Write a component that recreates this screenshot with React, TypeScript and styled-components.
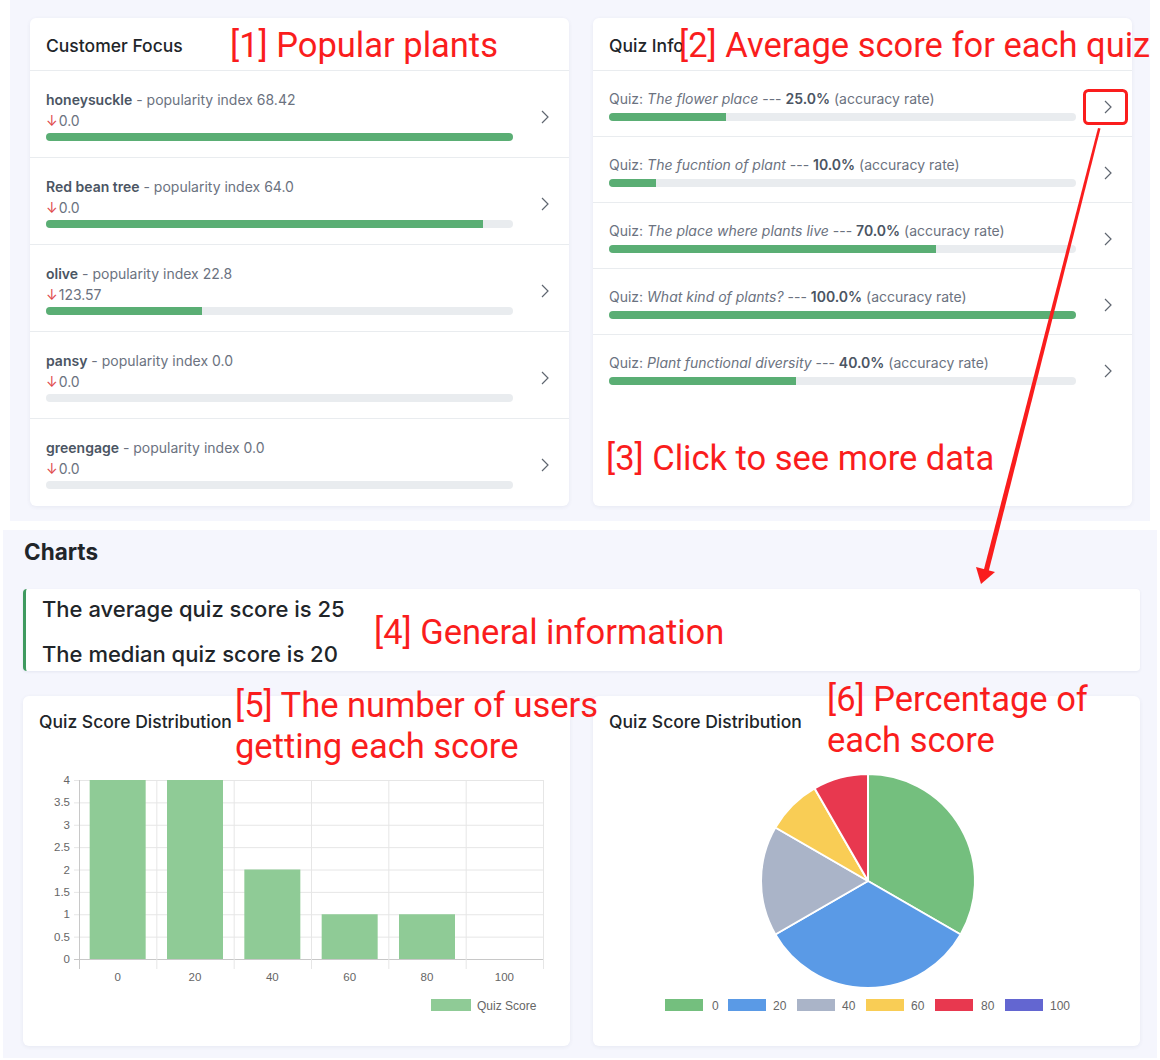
import React from "react";
import styled, { createGlobalStyle } from "styled-components";

const Global = createGlobalStyle`
  html, body { margin: 0; padding: 0; background: #ffffff; overflow: hidden; }
  body { font-family: Inter, "Liberation Sans", sans-serif; -webkit-font-smoothing: antialiased; }
  * { box-sizing: border-box; }
`;

const Root = styled.div`
  position: relative;
  width: 1160px;
  height: 1060px;
  overflow: hidden;
`;

const TopPanel = styled.section`
  margin-left: 10px;
  width: 1140px;
  height: 521px;
  background: #f5f6fd;
  padding: 18px 18px 0 20px;
  display: grid;
  grid-template-columns: 539px 539px;
  column-gap: 24px;
  align-items: start;
`;

const Card = styled.div`
  background: #ffffff;
  border-radius: 6px;
  box-shadow: 0 1px 4px rgba(40, 50, 100, 0.07);
  height: 488px;
  overflow: hidden;
`;

const CardHeader = styled.div`
  height: 53px;
  border-bottom: 1px solid #e9ecef;
  padding: 2px 16px 0;
  display: flex;
  align-items: center;
  font-size: 17.5px;
  font-weight: 500;
  color: #212529;
`;

const Row = styled.div<{ $compact?: boolean; $last?: boolean }>`
  display: grid;
  grid-template-columns: 467px 1fr;
  align-items: center;
  padding: 18px 20px ${(p) => (p.$compact ? "15px" : "16px")} 16px;
  border-bottom: ${(p) => (p.$last ? "none" : "1px solid #e9ecef")};
`;

const RowBody = styled.div`
  display: flex;
  flex-direction: column;
`;

const Line = styled.div`
  font-size: 14px;
  line-height: 21px;
  color: #6b7280;
  white-space: nowrap;
`;

const QuizLine = styled(Line)`
  line-height: 20px;
`;

const Strong = styled.b`
  font-weight: 600;
  color: #4b5563;
`;

const Em = styled.i`
  font-style: italic;
`;

const Down = styled.span`
  color: #e0474c;
  margin-right: 1px;
`;

const Track = styled.div<{ $mt: number }>`
  height: 8px;
  border-radius: 4px;
  background: #e9ecef;
  margin-top: ${(p) => p.$mt}px;
  overflow: hidden;
`;

const Fill = styled.div`
  height: 100%;
  background: #5aae74;
`;

const ChevronBox = styled.div`
  justify-self: end;
  display: flex;
  padding-top: 4px;
`;

const Chevron = () => (
  <ChevronBox>
    <svg width="8" height="14" viewBox="0 0 8 14">
      <polyline points="1,1 7,7 1,13" fill="none" stroke="#5f6670" strokeWidth="1.2" />
    </svg>
  </ChevronBox>
);

const BottomPanel = styled.section`
  margin: 9px 0 0 3px;
  width: 1154px;
  height: 528px;
  background: #f5f6fd;
  padding: 8px 17px 0 20px;
  display: flex;
  flex-direction: column;
`;

const SectionTitle = styled.h2`
  margin: 0 0 0 1px;
  font-size: 22.5px;
  line-height: 28px;
  font-weight: 700;
  color: #212529;
`;

const InfoBox = styled.div`
  margin-top: 23px;
  height: 82px;
  background: #ffffff;
  border-left: 3px solid #3f9a5f;
  border-radius: 4px;
  box-shadow: 0 1px 3px rgba(40, 50, 100, 0.08);
  padding: 7px 16px 0;
  display: flex;
  flex-direction: column;
  gap: 19px;
`;

const InfoText = styled.div`
  font-size: 22px;
  line-height: 26px;
  font-weight: 500;
  color: #212529;
`;

const ChartGrid = styled.div`
  margin-top: 25px;
  display: grid;
  grid-template-columns: 547px 547px;
  column-gap: 23px;
`;

const ChartCard = styled.div`
  background: #ffffff;
  border-radius: 6px;
  box-shadow: 0 1px 4px rgba(40, 50, 100, 0.07);
  height: 350px;
  padding: 16px;
`;

const ChartTitle = styled.div`
  font-size: 17.5px;
  line-height: 20px;
  font-weight: 500;
  color: #212529;
`;

const ChartSvg = styled.svg`
  display: block;
  margin-top: 34px;
  font-family: "Liberation Sans", Arial, sans-serif;
`;

const Overlay = styled.svg`
  position: absolute;
  left: 0;
  top: 0;
  pointer-events: none;
`;

const Note = styled.div<{ $x: number; $y: number }>`
  position: absolute;
  left: ${(p) => p.$x}px;
  top: ${(p) => p.$y}px;
  color: #fa1d1d;
  font-family: Roboto, "Noto Sans CJK SC", sans-serif;
  font-size: 34.5px;
  line-height: 41px;
  white-space: nowrap;
  pointer-events: none;
`;

const plants = [
  { name: "honeysuckle", idx: "68.42", delta: "0.0", pct: 100 },
  { name: "Red bean tree", idx: "64.0", delta: "0.0", pct: 93.5 },
  { name: "olive", idx: "22.8", delta: "123.57", pct: 33.3 },
  { name: "pansy", idx: "0.0", delta: "0.0", pct: 0 },
  { name: "greengage", idx: "0.0", delta: "0.0", pct: 0 },
];

const quizzes = [
  { title: "The flower place", rate: "25.0%", pct: 25 },
  { title: "The fucntion of plant", rate: "10.0%", pct: 10 },
  { title: "The place where plants live", rate: "70.0%", pct: 70 },
  { title: "What kind of plants?", rate: "100.0%", pct: 100 },
  { title: "Plant functional diversity", rate: "40.0%", pct: 40 },
];

const BarChart = () => {
  const left = 40;
  const right = 504;
  const top = 14;
  const bottom = 193;
  const h = bottom - top;
  const cw = (right - left) / 6;
  const yv = [0, 0.5, 1, 1.5, 2, 2.5, 3, 3.5, 4];
  const cats = ["0", "20", "40", "60", "80", "100"];
  const vals = [4, 4, 2, 1, 1, 0];
  const y = (v: number) => bottom - (v / 4) * h;
  return (
    <ChartSvg width="515" height="264" viewBox="0 0 515 264">
      {yv.map((v) => (
        <g key={v}>
          <line x1={left - 5} x2={right} y1={y(v) + 0.5} y2={y(v) + 0.5} stroke={v === 0 ? "#c8c8c8" : "#e6e6e6"} />
          <text x={31} y={y(v) + 4} fontSize="11.5" fill="#666" textAnchor="end">
            {v}
          </text>
        </g>
      ))}
      {Array.from({ length: 7 }).map((_, i) => (
        <line
          key={i}
          x1={left + i * cw + 0.5}
          x2={left + i * cw + 0.5}
          y1={top}
          y2={bottom + 10}
          stroke={i === 0 ? "#c8c8c8" : "#e6e6e6"}
        />
      ))}
      {vals.map((v, i) =>
        v > 0 ? (
          <rect key={i} x={left + i * cw + cw / 2 - 28} y={y(v)} width="56" height={bottom - y(v)} fill="#8fcb96" />
        ) : null
      )}
      {cats.map((c, i) => (
        <text key={c} x={left + i * cw + cw / 2} y={215} fontSize="11.5" fill="#666" textAnchor="middle">
          {c}
        </text>
      ))}
      <rect x="392" y="233" width="40" height="12" fill="#8fcb96" />
      <text x="438" y="243.5" fontSize="12" fill="#666">
        Quiz Score
      </text>
    </ChartSvg>
  );
};

const PieChart = () => {
  const cx = 259;
  const cy = 115;
  const r = 107;
  const data = [4, 4, 2, 1, 1, 0];
  const colors = ["#74bf7e", "#5a9ae6", "#aab4c8", "#f9cd55", "#e8384f", "#6366d1"];
  const labels = ["0", "20", "40", "60", "80", "100"];
  const total = data.reduce((a, b) => a + b, 0);
  let a0 = -Math.PI / 2;
  const slices = data.map((d, i) => {
    const a1 = a0 + (d / total) * Math.PI * 2;
    const x0 = cx + r * Math.cos(a0);
    const y0 = cy + r * Math.sin(a0);
    const x1 = cx + r * Math.cos(a1);
    const y1 = cy + r * Math.sin(a1);
    const large = a1 - a0 > Math.PI ? 1 : 0;
    const path = `M${cx},${cy} L${x0},${y0} A${r},${r} 0 ${large} 1 ${x1},${y1} Z`;
    a0 = a1;
    return d > 0 ? <path key={i} d={path} fill={colors[i]} stroke="#fff" strokeWidth="2" strokeLinejoin="round" /> : null;
  });
  const boxX = [56, 119, 188, 257, 326, 396];
  const txtX = [103, 164, 233, 302, 372, 441];
  return (
    <ChartSvg width="515" height="264" viewBox="0 0 515 264">
      {slices}
      {labels.map((l, i) => (
        <g key={l}>
          <rect x={boxX[i]} y="233" width="38" height="12" fill={colors[i]} />
          <text x={txtX[i]} y="243.5" fontSize="12" fill="#666">
            {l}
          </text>
        </g>
      ))}
    </ChartSvg>
  );
};

export default function App() {
  return (
    <Root>
      <Global />
      <TopPanel>
        <Card>
          <CardHeader>Customer Focus</CardHeader>
          {plants.map((p, i) => (
            <Row key={p.name} $last={i === plants.length - 1}>
              <RowBody>
                <Line>
                  <Strong>{p.name}</Strong> - popularity index {p.idx}
                </Line>
                <Line>
                  <Down>↓</Down>
                  {p.delta}
                </Line>
                <Track $mt={2}>
                  <Fill style={{ width: `${p.pct}%` }} />
                </Track>
              </RowBody>
              <Chevron />
            </Row>
          ))}
        </Card>
        <Card>
          <CardHeader>Quiz Info</CardHeader>
          {quizzes.map((q, i) => (
            <Row key={q.title} $compact $last={i === quizzes.length - 1}>
              <RowBody>
                <QuizLine>
                  Quiz: <Em>{q.title}</Em> --- <Strong>{q.rate}</Strong> (accuracy rate)
                </QuizLine>
                <Track $mt={4}>
                  <Fill style={{ width: `${q.pct}%` }} />
                </Track>
              </RowBody>
              <Chevron />
            </Row>
          ))}
        </Card>
      </TopPanel>
      <BottomPanel>
        <SectionTitle>Charts</SectionTitle>
        <InfoBox>
          <InfoText>The average quiz score is 25</InfoText>
          <InfoText>The median quiz score is 20</InfoText>
        </InfoBox>
        <ChartGrid>
          <ChartCard>
            <ChartTitle>Quiz Score Distribution</ChartTitle>
            <BarChart />
          </ChartCard>
          <ChartCard>
            <ChartTitle>Quiz Score Distribution</ChartTitle>
            <PieChart />
          </ChartCard>
        </ChartGrid>
      </BottomPanel>

      <Overlay width="1160" height="1060" viewBox="0 0 1160 1060">
        <rect x="1084.5" y="90.5" width="42" height="33" rx="4" fill="none" stroke="#fa1d1d" strokeWidth="3" />
        <polygon points="1098,128 1100.5,128.5 988,574 983,573" fill="#fa1d1d" />
        <polygon points="981,584 976,567 995,572" fill="#fa1d1d" />
      </Overlay>

      <Note $x={230} $y={25}>[1] Popular plants</Note>
      <Note $x={679} $y={25}>[2] Average score for each quiz</Note>
      <Note $x={606} $y={438}>[3] Click to see more data</Note>
      <Note $x={374} $y={612}>[4] General information</Note>
      <Note $x={235} $y={685}>
        [5] The number of users
        <br />
        getting each score
      </Note>
      <Note $x={827} $y={679}>
        [6] Percentage of
        <br />
        each score
      </Note>
    </Root>
  );
}
